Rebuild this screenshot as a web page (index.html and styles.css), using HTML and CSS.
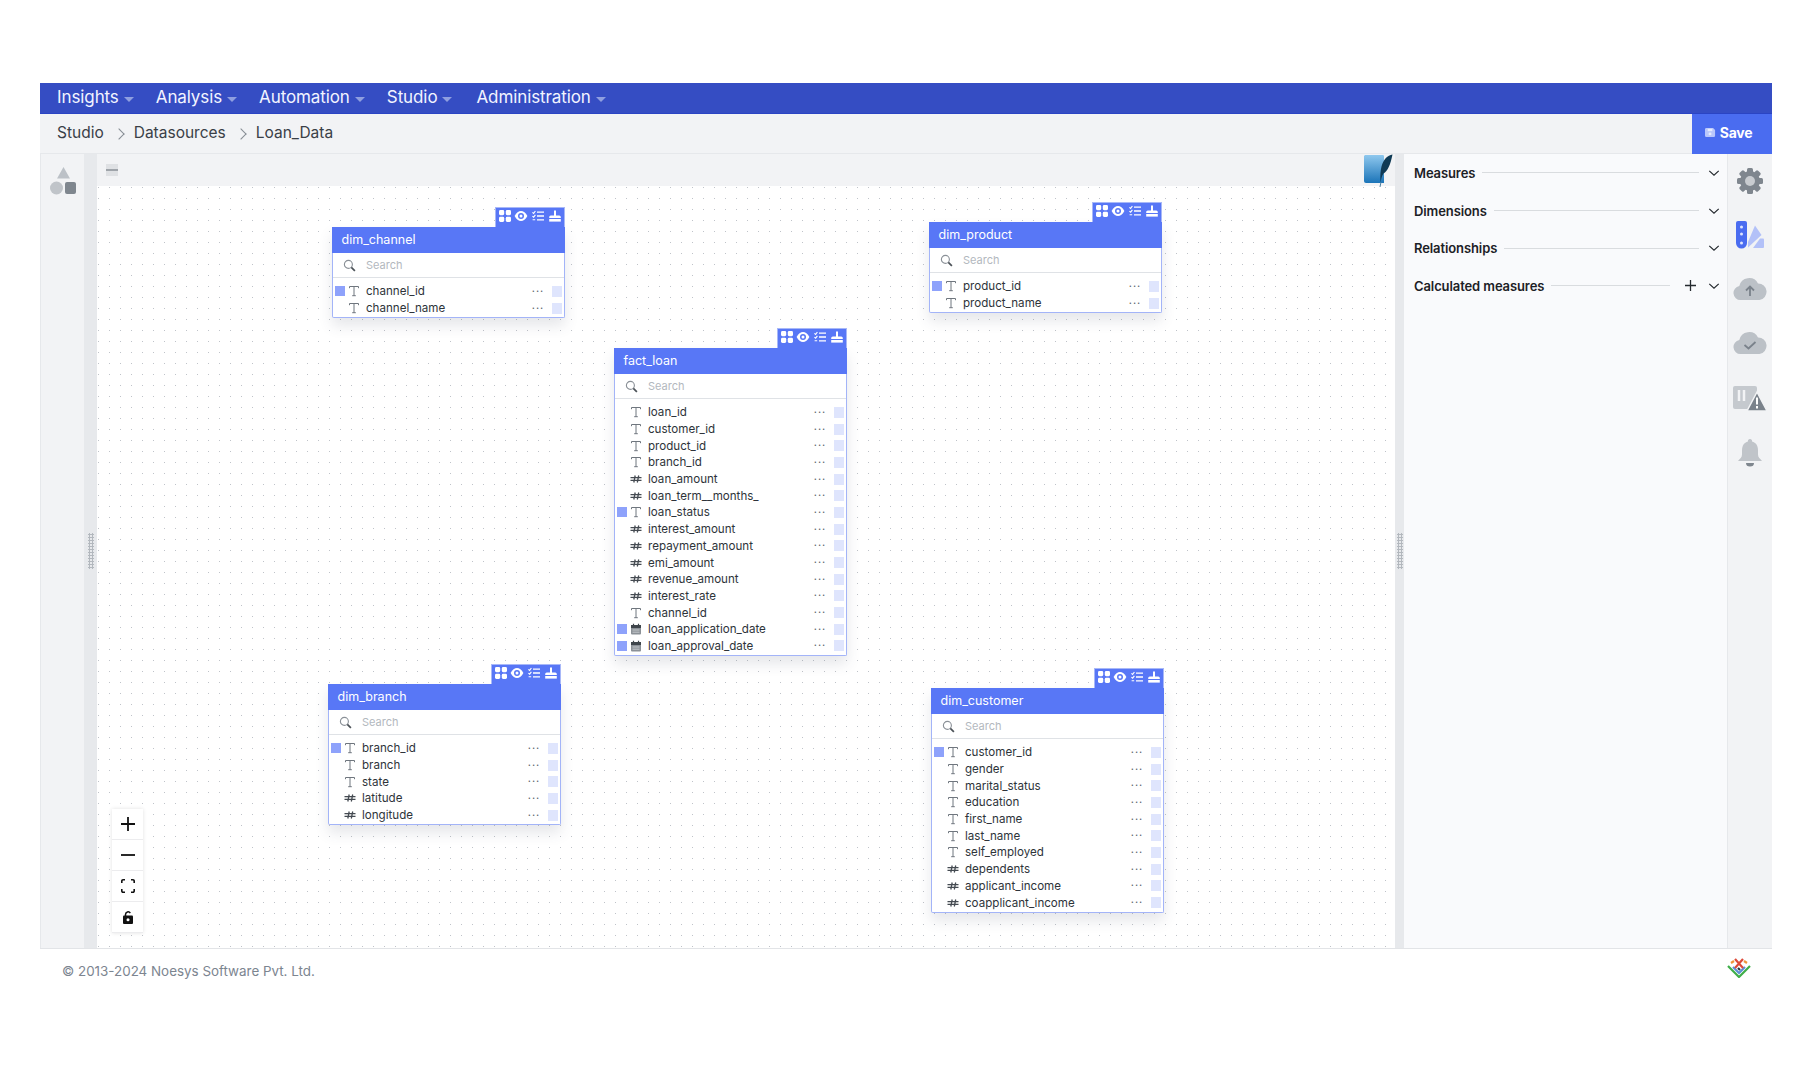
FILE: index.html
```html
<!DOCTYPE html>
<html lang="en">
<head>
<meta charset="utf-8">
<title>Loan_Data</title>
<link rel="stylesheet" href="styles.css">
</head>
<body>
<svg class="defs" aria-hidden="true">
  <symbol id="t" viewBox="0 0 12 12"><path d="M1.5 3.2V1.5h9v1.7M6 1.5v9.2M4.2 10.7h3.6" fill="none" stroke="#6f767e" stroke-width="1"/></symbol>
  <symbol id="h" viewBox="0 0 12 12"><path d="M.5 4.700h11M.5 7.300h11M5.200 2.500 3.800 9.500M8.700 2.500 7.300 9.500" fill="none" stroke="#454b52" stroke-width="1.300"/></symbol>
  <symbol id="c" viewBox="0 0 12 12"><rect x="1" y="2" width="10" height="9.500" rx="1" fill="#8b9197"/><rect x="1" y="2" width="10" height="3" fill="#3f454b"/><path d="M3.500.8v2M8.500.8v2" stroke="#3f454b" stroke-width="1.200"/><path d="M2.500 7h7M2.500 9.200h7" stroke="#d6d8db" stroke-width=".8"/></symbol>
  <symbol id="s" viewBox="0 0 14 14"><circle cx="5.800" cy="5.800" r="4.300" fill="none" stroke="#8a9097" stroke-width="1.200"/><path d="m9 9 3.800 3.800" stroke="#4b5157" stroke-width="1.800"/></symbol>
  <symbol id="g" viewBox="0 0 12 12"><rect x="0" y="0" width="5.200" height="5.200" rx="1.400" fill="#fff"/><rect x="6.800" y="0" width="5.200" height="5.200" rx="1.400" fill="#fff"/><rect x="0" y="6.800" width="5.200" height="5.200" rx="1.400" fill="#fff"/><rect x="6.800" y="6.800" width="5.200" height="5.200" rx="1.400" fill="#fff"/></symbol>
  <symbol id="e" viewBox="0 0 14 12"><path d="M.6 6C2.400 2.400 4.600 1 7 1s4.600 1.400 6.400 5C11.600 9.600 9.400 11 7 11S2.400 9.600.6 6z" fill="#fff"/><circle cx="7" cy="6" r="3" fill="#5877f6"/><circle cx="7" cy="6" r="1.500" fill="#fff"/></symbol>
  <symbol id="l" viewBox="0 0 12 12"><path d="M5 2.200h7M5 6h7M5 9.800h7" stroke="#fff" stroke-width="1.300"/><path d="m.4 2.400 1.200 1L3.400 1M.4 6.200l1.200 1 1.800-2.400M.6 9.800h2.600" fill="none" stroke="#fff" stroke-width="1.100"/></symbol>
  <symbol id="b" viewBox="0 0 12 12"><path d="M5 .5h2v5h3.200a1.600 1.600 0 0 1 1.600 1.600V8H.2v-.9a1.600 1.600 0 0 1 1.600-1.600H5z" fill="#fff"/><path d="M.2 9h11.600v2.600H.2z" fill="#fff"/></symbol>
  <symbol id="v" viewBox="0 0 14 8"><path d="m1.500 1.500 5.500 5 5.500-5" fill="none" stroke="#24292e" stroke-width="1.400"/></symbol>
</svg>

<div class="app">
  <nav class="nav">
    <a class="nav-item">Insights<i class="caret"></i></a>
    <a class="nav-item">Analysis<i class="caret"></i></a>
    <a class="nav-item">Automation<i class="caret"></i></a>
    <a class="nav-item">Studio<i class="caret"></i></a>
    <a class="nav-item">Administration<i class="caret"></i></a>
  </nav>

  <header class="crumbs">
    <span class="crumb">Studio</span><i class="sep"></i><span class="crumb">Datasources</span><i class="sep"></i><span class="crumb">Loan_Data</span>
    <button class="save">
      <svg class="save-ico" viewBox="0 0 12 12"><path d="M1.500 1h7.300L11 3.200v6.300A1.500 1.500 0 0 1 9.500 11h-8A1.500 1.500 0 0 1 0 9.500v-7A1.500 1.500 0 0 1 1.500 1z" fill="#b9c7fb"/><rect x="3" y="2" width="5" height="2.500" fill="#e6ebfe"/><circle cx="5.500" cy="7.500" r="1.600" fill="#e6ebfe"/></svg>Save
    </button>
  </header>

  <main class="main">
    <aside class="rail">
      <svg class="shapes" viewBox="0 0 26 28"><path d="M13.500 0 20 11.500H7z" fill="#bcc1c7"/><circle cx="6.500" cy="21" r="6.500" fill="#c0c4c9"/><rect x="15" y="15" width="11" height="12" rx="2" fill="#7f868e"/></svg>
    </aside>
    <div class="gutter"><i class="grip"></i></div>

    <section class="canvas">
      <div class="strip">
        <svg class="fit" viewBox="0 0 12 12"><rect width="12" height="12" fill="#dfe1e4"/><path d="M0 6h12" stroke="#8f959c" stroke-width="1.600"/></svg>
        <svg class="sqlite" viewBox="0 0 30 34">
          <defs><linearGradient id="blue" x1="0" y1="0" x2="0" y2="1"><stop offset="0" stop-color="#8fc8ee"/><stop offset="1" stop-color="#1b74b8"/></linearGradient></defs>
          <path d="M2 1h18c1 0 1 1 1 2v26H3a2 2 0 0 1-2-2V2z" fill="url(#blue)"/>
          <path d="M29.500.5c-5 .6-9 5-11 12-1 4-1.500 9-1 16 .8-4 1.500-7 3-9 4-2 7-9 9-19z" fill="#0f3a55"/>
          <path d="M17 33l1-5" stroke="#4a7fa3" stroke-width="1"/>
        </svg>
      </div>
      <div class="dots"></div>

      <article class="node n-channel">
        <div class="tools"><svg class="t1"><use href="#g"/></svg><svg class="t2"><use href="#e"/></svg><svg class="t3"><use href="#l"/></svg><svg class="t4"><use href="#b"/></svg></div>
        <div class="box">
          <h3 class="title">dim_channel</h3>
          <div class="search"><svg class="s-ico"><use href="#s"/></svg>Search</div>
          <ul class="rows">
            <li class="row"><i class="mark on"></i><svg class="ty"><use href="#t"/></svg><span class="name">channel_id</span><i class="more">···</i><i class="sq"></i></li>
            <li class="row"><i class="mark"></i><svg class="ty"><use href="#t"/></svg><span class="name">channel_name</span><i class="more">···</i><i class="sq"></i></li>
          </ul>
        </div>
      </article>

      <article class="node n-product">
        <div class="tools"><svg class="t1"><use href="#g"/></svg><svg class="t2"><use href="#e"/></svg><svg class="t3"><use href="#l"/></svg><svg class="t4"><use href="#b"/></svg></div>
        <div class="box">
          <h3 class="title">dim_product</h3>
          <div class="search"><svg class="s-ico"><use href="#s"/></svg>Search</div>
          <ul class="rows">
            <li class="row"><i class="mark on"></i><svg class="ty"><use href="#t"/></svg><span class="name">product_id</span><i class="more">···</i><i class="sq"></i></li>
            <li class="row"><i class="mark"></i><svg class="ty"><use href="#t"/></svg><span class="name">product_name</span><i class="more">···</i><i class="sq"></i></li>
          </ul>
        </div>
      </article>

      <article class="node n-fact">
        <div class="tools"><svg class="t1"><use href="#g"/></svg><svg class="t2"><use href="#e"/></svg><svg class="t3"><use href="#l"/></svg><svg class="t4"><use href="#b"/></svg></div>
        <div class="box">
          <h3 class="title">fact_loan</h3>
          <div class="search"><svg class="s-ico"><use href="#s"/></svg>Search</div>
          <ul class="rows">
            <li class="row"><i class="mark"></i><svg class="ty"><use href="#t"/></svg><span class="name">loan_id</span><i class="more">···</i><i class="sq"></i></li>
            <li class="row"><i class="mark"></i><svg class="ty"><use href="#t"/></svg><span class="name">customer_id</span><i class="more">···</i><i class="sq"></i></li>
            <li class="row"><i class="mark"></i><svg class="ty"><use href="#t"/></svg><span class="name">product_id</span><i class="more">···</i><i class="sq"></i></li>
            <li class="row"><i class="mark"></i><svg class="ty"><use href="#t"/></svg><span class="name">branch_id</span><i class="more">···</i><i class="sq"></i></li>
            <li class="row"><i class="mark"></i><svg class="ty"><use href="#h"/></svg><span class="name">loan_amount</span><i class="more">···</i><i class="sq"></i></li>
            <li class="row"><i class="mark"></i><svg class="ty"><use href="#h"/></svg><span class="name">loan_term__months_</span><i class="more">···</i><i class="sq"></i></li>
            <li class="row"><i class="mark on"></i><svg class="ty"><use href="#t"/></svg><span class="name">loan_status</span><i class="more">···</i><i class="sq"></i></li>
            <li class="row"><i class="mark"></i><svg class="ty"><use href="#h"/></svg><span class="name">interest_amount</span><i class="more">···</i><i class="sq"></i></li>
            <li class="row"><i class="mark"></i><svg class="ty"><use href="#h"/></svg><span class="name">repayment_amount</span><i class="more">···</i><i class="sq"></i></li>
            <li class="row"><i class="mark"></i><svg class="ty"><use href="#h"/></svg><span class="name">emi_amount</span><i class="more">···</i><i class="sq"></i></li>
            <li class="row"><i class="mark"></i><svg class="ty"><use href="#h"/></svg><span class="name">revenue_amount</span><i class="more">···</i><i class="sq"></i></li>
            <li class="row"><i class="mark"></i><svg class="ty"><use href="#h"/></svg><span class="name">interest_rate</span><i class="more">···</i><i class="sq"></i></li>
            <li class="row"><i class="mark"></i><svg class="ty"><use href="#t"/></svg><span class="name">channel_id</span><i class="more">···</i><i class="sq"></i></li>
            <li class="row"><i class="mark on"></i><svg class="ty"><use href="#c"/></svg><span class="name">loan_application_date</span><i class="more">···</i><i class="sq"></i></li>
            <li class="row"><i class="mark on"></i><svg class="ty"><use href="#c"/></svg><span class="name">loan_approval_date</span><i class="more">···</i><i class="sq"></i></li>
          </ul>
        </div>
      </article>

      <article class="node n-branch">
        <div class="tools"><svg class="t1"><use href="#g"/></svg><svg class="t2"><use href="#e"/></svg><svg class="t3"><use href="#l"/></svg><svg class="t4"><use href="#b"/></svg></div>
        <div class="box">
          <h3 class="title">dim_branch</h3>
          <div class="search"><svg class="s-ico"><use href="#s"/></svg>Search</div>
          <ul class="rows">
            <li class="row"><i class="mark on"></i><svg class="ty"><use href="#t"/></svg><span class="name">branch_id</span><i class="more">···</i><i class="sq"></i></li>
            <li class="row"><i class="mark"></i><svg class="ty"><use href="#t"/></svg><span class="name">branch</span><i class="more">···</i><i class="sq"></i></li>
            <li class="row"><i class="mark"></i><svg class="ty"><use href="#t"/></svg><span class="name">state</span><i class="more">···</i><i class="sq"></i></li>
            <li class="row"><i class="mark"></i><svg class="ty"><use href="#h"/></svg><span class="name">latitude</span><i class="more">···</i><i class="sq"></i></li>
            <li class="row"><i class="mark"></i><svg class="ty"><use href="#h"/></svg><span class="name">longitude</span><i class="more">···</i><i class="sq"></i></li>
          </ul>
        </div>
      </article>

      <article class="node n-customer">
        <div class="tools"><svg class="t1"><use href="#g"/></svg><svg class="t2"><use href="#e"/></svg><svg class="t3"><use href="#l"/></svg><svg class="t4"><use href="#b"/></svg></div>
        <div class="box">
          <h3 class="title">dim_customer</h3>
          <div class="search"><svg class="s-ico"><use href="#s"/></svg>Search</div>
          <ul class="rows">
            <li class="row"><i class="mark on"></i><svg class="ty"><use href="#t"/></svg><span class="name">customer_id</span><i class="more">···</i><i class="sq"></i></li>
            <li class="row"><i class="mark"></i><svg class="ty"><use href="#t"/></svg><span class="name">gender</span><i class="more">···</i><i class="sq"></i></li>
            <li class="row"><i class="mark"></i><svg class="ty"><use href="#t"/></svg><span class="name">marital_status</span><i class="more">···</i><i class="sq"></i></li>
            <li class="row"><i class="mark"></i><svg class="ty"><use href="#t"/></svg><span class="name">education</span><i class="more">···</i><i class="sq"></i></li>
            <li class="row"><i class="mark"></i><svg class="ty"><use href="#t"/></svg><span class="name">first_name</span><i class="more">···</i><i class="sq"></i></li>
            <li class="row"><i class="mark"></i><svg class="ty"><use href="#t"/></svg><span class="name">last_name</span><i class="more">···</i><i class="sq"></i></li>
            <li class="row"><i class="mark"></i><svg class="ty"><use href="#t"/></svg><span class="name">self_employed</span><i class="more">···</i><i class="sq"></i></li>
            <li class="row"><i class="mark"></i><svg class="ty"><use href="#h"/></svg><span class="name">dependents</span><i class="more">···</i><i class="sq"></i></li>
            <li class="row"><i class="mark"></i><svg class="ty"><use href="#h"/></svg><span class="name">applicant_income</span><i class="more">···</i><i class="sq"></i></li>
            <li class="row"><i class="mark"></i><svg class="ty"><use href="#h"/></svg><span class="name">coapplicant_income</span><i class="more">···</i><i class="sq"></i></li>
          </ul>
        </div>
      </article>

      <div class="zoomer">
        <button class="z-btn"><svg viewBox="0 0 14 14"><path d="M7 0v14M0 7h14" stroke="#111" stroke-width="1.800"/></svg></button>
        <button class="z-btn"><svg viewBox="0 0 14 14"><path d="M0 7h14" stroke="#111" stroke-width="1.800"/></svg></button>
        <button class="z-btn"><svg viewBox="0 0 14 14"><path d="M.8 4V2A1.200 1.200 0 0 1 2 .8h2M10 .8h2A1.200 1.200 0 0 1 13.200 2v2M13.200 10v2a1.200 1.200 0 0 1-1.200 1.200h-2M4 13.200H2A1.200 1.200 0 0 1 .8 12v-2" fill="none" stroke="#111" stroke-width="1.600"/></svg></button>
        <button class="z-btn"><svg viewBox="0 0 14 14"><path d="M4.500 6V4.500a2.600 2.600 0 0 1 4.800-1.400" fill="none" stroke="#111" stroke-width="1.500"/><rect x="2" y="5.500" width="10" height="8.500" rx="1" fill="#111"/><circle cx="7" cy="9.800" r="1.500" fill="#fff"/></svg></button>
      </div>
    </section>

    <div class="gutter thin"><i class="grip"></i></div>

    <aside class="panel">
      <div class="acc"><span>Measures</span><i class="rule"></i><svg class="chev"><use href="#v"/></svg></div>
      <div class="acc"><span>Dimensions</span><i class="rule"></i><svg class="chev"><use href="#v"/></svg></div>
      <div class="acc"><span>Relationships</span><i class="rule"></i><svg class="chev"><use href="#v"/></svg></div>
      <div class="acc"><span>Calculated measures</span><i class="rule"></i><svg class="plus" viewBox="0 0 12 12"><path d="M6 0v12M0 6h12" stroke="#24292e" stroke-width="1.400"/></svg><svg class="chev"><use href="#v"/></svg></div>
    </aside>

    <aside class="tools-rail">
      <svg class="r-ico" viewBox="0 0 28 28"><g fill="#7f868e"><rect x="11" y="1" width="6" height="26" rx="1.500"/><rect x="11" y="1" width="6" height="26" rx="1.500" transform="rotate(45 14 14)"/><rect x="11" y="1" width="6" height="26" rx="1.500" transform="rotate(90 14 14)"/><rect x="11" y="1" width="6" height="26" rx="1.500" transform="rotate(135 14 14)"/><circle cx="14" cy="14" r="10"/></g><circle cx="14" cy="14" r="5" fill="#c9ccd0"/></svg>
      <svg class="r-ico" viewBox="0 0 28 28"><path d="M12 21 19 4.500l6.500 9.500L12 26.500z" fill="#b3c1f8"/><path d="M17 27l7-9.500h3a1 1 0 0 1 1 1V26a1 1 0 0 1-1 1z" fill="#b3c1f8"/><path d="M0 2a2 2 0 0 1 2-2h7a2 2 0 0 1 2 2v20a5.500 5.500 0 0 1-11 0z" fill="#4a6cf0"/><g fill="#dfe5fd"><circle cx="5.500" cy="6" r="1.500"/><circle cx="5.500" cy="13" r="1.500"/><circle cx="5.500" cy="22" r="1.500"/></g></svg>
      <svg class="r-ico wide" viewBox="0 0 34 24"><path d="M7.500 23a7 7 0 0 1-1.200-13.900A10 10 0 0 1 25 6.500 8.300 8.300 0 0 1 26.500 23z" fill="#bcc1c7"/><path d="M17 19v-9M13 13.500l4-4 4 4" fill="none" stroke="#7a828b" stroke-width="1.800"/></svg>
      <svg class="r-ico wide" viewBox="0 0 34 24"><path d="M7.500 23a7 7 0 0 1-1.200-13.900A10 10 0 0 1 25 6.500 8.300 8.300 0 0 1 26.500 23z" fill="#bcc1c7"/><path d="m11.500 14 4 3.500 7-6.500" fill="none" stroke="#7a828b" stroke-width="1.800"/></svg>
      <svg class="r-ico wide warn" viewBox="0 0 34 26"><rect x="0" y="0" width="24" height="23" rx="2" fill="#c5c9ce"/><path d="M6 4v11M11 4v11" stroke="#f2f3f5" stroke-width="2.500"/><path d="M24 6 34 25H14z" fill="#7a828b" stroke="#f2f3f5" stroke-width="1.500"/><path d="M24 11.500v7M24 20v2.500" stroke="#fff" stroke-width="2"/></svg>
      <svg class="r-ico" viewBox="0 0 28 28"><path d="M14 0a2 2 0 0 1 2 2.500c4 1 6 4 6 9v4c0 3 2 4 4 6.500H2c2-2.500 4-3.500 4-6.500v-4c0-5 2-8 6-9A2 2 0 0 1 14 0z" fill="#c0c4c9"/><path d="M10 24h8a4 3.500 0 0 1-8 0z" fill="#7f868e"/></svg>
    </aside>
  </main>

  <footer class="footer">
    <span class="copy">© 2013-2024 Noesys Software Pvt. Ltd.</span>
    <svg class="logo" viewBox="0 0 24 20"><g fill="none" stroke-width="2.200"><path d="M1 8l11 11L23 8" stroke="#3fae49"/><path d="M6 9l6 6 6-6" stroke="#5c8fd6"/><path d="M8 1l8 9M16 1 8 10" stroke="#dd4b39"/><path d="M4 5l3-2M17 3l3 2" stroke="#f0953a"/><path d="M11 10l2 2" stroke="#27313a"/></g></svg>
  </footer>
</div>
</body>
</html>
```

FILE: styles.css
```css
* { box-sizing: border-box; }
html, body { margin: 0; padding: 0; }
body {
  background: #fff;
  font-family: "Inter", "Liberation Sans", sans-serif;
  color: #24292e;
  height: 1072px;
  overflow: hidden;
}
.defs { position: absolute; width: 0; height: 0; }
i { font-style: normal; }

.app { margin: 83px 40px 0; width: 1732px; }

.nav {
  height: 31px;
  background: #354dc3;
  border-bottom: 1px solid #2a44c4;
  display: flex;
  align-items: center;
  padding: 0 0 2px 17px;
  gap: 22px;
}
.nav-item {
  color: #f2f4ff;
  font-size: 17px;
  letter-spacing: -.1px;
  display: flex;
  align-items: center;
  gap: 5px;
}
.nav-item:last-child { margin-left: 2px; }
.caret {
  width: 0; height: 0;
  border-left: 5px solid transparent;
  border-right: 5px solid transparent;
  border-top: 5px solid #8f9fe0;
  margin-top: 4px;
}

.crumbs {
  height: 40px;
  background: #f2f3f5;
  display: flex;
  align-items: center;
  padding-left: 17px;
  font-size: 15.5px;
  color: #3a4047;
  border-bottom: 1px solid #e6e8eb;
}
.crumb { padding-bottom: 2px; }
.sep {
  width: 8px; height: 8px;
  border-top: 1px solid #868c93;
  border-right: 1px solid #868c93;
  transform: rotate(45deg);
  margin: 0 11px 0 11px;
}
.save {
  margin-left: auto;
  width: 80px;
  height: 40px;
  background: #4a6cf0;
  border: 0;
  padding: 0 7px 2px 0;
  color: #fff;
  font: 700 14px "Inter", "Liberation Sans", sans-serif;
  letter-spacing: -.3px;
  display: flex;
  align-items: center;
  justify-content: center;
  gap: 4px;
}
.save-ico { width: 11px; height: 11px; }

.main {
  height: 795px;
  display: flex;
  background: #f2f3f5;
  border-bottom: 1px solid #e2e4e7;
}
.rail {
  width: 44px;
  border-left: 1px solid #e6e8eb;
  display: flex;
  justify-content: center;
  padding-top: 13px;
}
.shapes { width: 26px; height: 28px; }
.gutter {
  width: 13px;
  background: #e7e9ec;
  display: flex;
  align-items: center;
  justify-content: center;
}
.gutter.thin { width: 9px; }
.grip {
  width: 6px; height: 36px;
  background: radial-gradient(circle, #b3b8be 1px, transparent 1.200px) 0 0 / 3px 3px;
}

.canvas {
  width: 1298px;
  position: relative;
  display: flex;
  flex-direction: column;
}
.strip {
  height: 32px;
  position: relative;
  background: #f2f3f5;
  padding: 10px 0 0 9px;
}
.fit { width: 12px; height: 12px; display: block; }
.sqlite { position: absolute; right: 2px; top: 0; width: 30px; height: 34px; }
.dots {
  flex: 1;
  background: #fff radial-gradient(circle, #bfc3c9 .8px, transparent 1px) -4px -4px / 11px 11px;
}

.node { position: absolute; width: 233px; }
.n-channel { left: 235px; top: 53px; }
.n-product { left: 832px; top: 48px; }
.n-fact { left: 517px; top: 174px; }
.n-branch { left: 231px; top: 510px; }
.n-customer { left: 834px; top: 514px; }

.tools {
  width: 70px;
  height: 20px;
  margin-left: auto;
  background: #5877f6;
  border: 1px solid #a8b8f8;
  border-bottom: 0;
  position: relative;
  display: flex;
  align-items: center;
  padding: 0 0 4px 3px;
}
.tools svg { width: 12px; height: 12px; display: block; flex: none; }
.tools .t2 { width: 14px; margin-left: 3px; }
.tools .t3 { margin-left: 4px; }
.tools .t4 { margin-left: 5px; }

.box {
  background: #fff;
  border: 1px solid #a3b4f8;
  border-top: 0;
  border-radius: 0 0 2px 2px;
  box-shadow: 0 8px 14px rgba(60, 70, 90, .13);
}
.title {
  margin: 0 -1px;
  height: 26px;
  background: #5877f6;
  color: #fff;
  font-size: 12.500px;
  font-weight: 400;
  line-height: 26px;
  padding-left: 9.500px;
}
.search {
  height: 25px;
  border-bottom: 1px solid #dfe2e6;
  display: flex;
  align-items: center;
  font-size: 11px;
  color: #b3b8be;
  padding-left: 10px;
}
.s-ico { width: 13px; height: 13px; margin-right: 10px; }
.rows { list-style: none; margin: 0; padding: 5px 0 1px 2px; }
.row { height: 16.700px; display: flex; align-items: center; }
.mark { width: 10px; height: 10px; flex: none; }
.mark.on { background: #8ea2fb; }
.ty { width: 12px; height: 12px; margin: 0 6px 0 3px; flex: none; }
.name { flex: 1; font-size: 11.600px; color: #2e343a; white-space: nowrap; }
.more {
  width: 14px;
  text-align: center;
  font-size: 11px;
  letter-spacing: 1px;
  line-height: 1;
  color: #5e646b;
  margin-right: 7px;
}
.sq { width: 10px; height: 11px; background: #dfe5fd; margin-right: 2px; flex: none; }

.zoomer {
  position: absolute;
  left: 15px;
  bottom: 15px;
  width: 31px;
  display: flex;
  flex-direction: column;
  box-shadow: 0 0 4px rgba(0, 0, 0, .12);
}
.z-btn {
  height: 31px;
  padding: 0;
  border: 0;
  border-bottom: 1px solid #ececee;
  background: #fff;
  display: flex;
  align-items: center;
  justify-content: center;
}
.z-btn svg { width: 14px; height: 14px; }

.panel {
  width: 324px;
  background: #f9fafc;
  padding: 0 7px 0 10px;
  border-right: 1px solid #e6e8eb;
}
.acc {
  height: 37.700px;
  display: flex;
  align-items: center;
  font-size: 13px;
  font-weight: 600;
  letter-spacing: -.1px;
  color: #1c2126;
}
.rule { flex: 1; height: 1px; background: #d9dcdf; margin: 0 9px 0 7px; }
.chev { width: 12px; height: 8px; flex: none; }
.plus { width: 11px; height: 11px; flex: none; margin: 0 12px 0 6px; }

.tools-rail {
  width: 44px;
  display: flex;
  flex-direction: column;
  align-items: center;
  padding-top: 13px;
}
.r-ico { width: 28px; height: 28px; margin-bottom: 26px; flex: none; }
.r-ico.wide { width: 34px; }
.r-ico.warn { margin: 2px 0 26px; }

.footer {
  height: 40px;
  display: flex;
  align-items: center;
  justify-content: space-between;
  padding: 0 21px 0 22px;
  font-size: 13.400px;
  color: #7c8590;
}
.copy { padding-top: 3px; }
.logo { width: 24px; height: 20px; margin-top: -2px; }
```
